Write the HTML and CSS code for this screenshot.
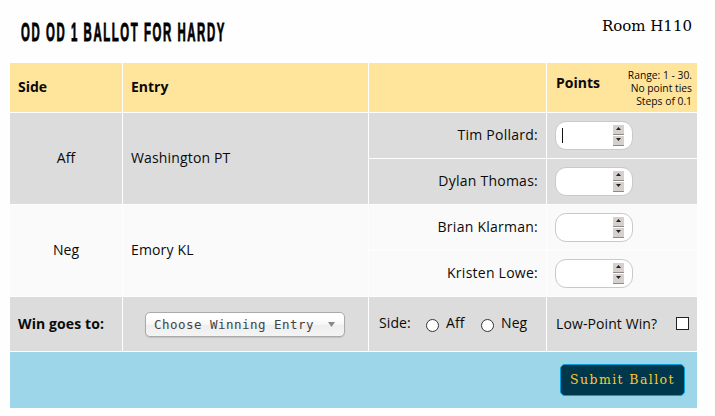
FILE: index.html
```html
<!DOCTYPE html>
<html lang="en">
<head>
<meta charset="utf-8">
<title>Ballot</title>
<link rel="stylesheet" href="styles.css">
</head>
<body>
<header class="top">
  <h1><span class="title">OD OD 1 BALLOT FOR HARDY</span></h1>
  <div class="room">Room H110</div>
</header>
<main class="ballot">
  <div class="cell head">Side</div>
  <div class="cell head">Entry</div>
  <div class="cell head"></div>
  <div class="cell head points"><span class="points-label">Points</span><small>Range: 1 - 30.<br>No point ties<br>Steps of 0.1</small></div>

  <div class="cell gray tall center">Aff</div>
  <div class="cell gray tall entry">Washington PT</div>
  <div class="cell gray name">Tim Pollard:</div>
  <div class="cell gray"><div class="num"><i class="caret"></i><span class="spin"><b class="up"></b><b class="down"></b></span></div></div>
  <div class="cell gray name">Dylan Thomas:</div>
  <div class="cell gray"><div class="num"><span class="spin"><b class="up"></b><b class="down"></b></span></div></div>

  <div class="cell light tall center">Neg</div>
  <div class="cell light tall entry">Emory KL</div>
  <div class="cell light name">Brian Klarman:</div>
  <div class="cell light"><div class="num"><span class="spin"><b class="up"></b><b class="down"></b></span></div></div>
  <div class="cell light name">Kristen Lowe:</div>
  <div class="cell light"><div class="num"><span class="spin"><b class="up"></b><b class="down"></b></span></div></div>

  <div class="cell gray strong">Win goes to:</div>
  <div class="cell gray pick"><div class="select"><span>Choose Winning Entry</span><i class="arrow"></i></div></div>
  <div class="cell gray side"><span class="side-label">Side:</span><i class="radio"></i><span class="aff">Aff</span><i class="radio"></i><span>Neg</span></div>
  <div class="cell gray low"><span>Low-Point Win?</span><i class="check"></i></div>

  <div class="cell foot"><button class="submit">Submit Ballot</button></div>
</main>
</body>
</html>
```
FILE: styles.css
```css
* { box-sizing: border-box; }
body {
  margin: 0;
  width: 715px;
  height: 416px;
  overflow: hidden;
  background: #fefefe;
  color: #0a0a0a;
  font: 14px/20px "Open Sans", "Noto Sans", sans-serif;
}
.top {
  display: flex;
  justify-content: space-between;
  height: 63px;
  padding: 16px 23px 0 21px;
}
h1 {
  margin: 0;
  width: 203px;
  font: bold 26px/32px "Liberation Sans", sans-serif;
  color: #000;
  white-space: nowrap;
}
.title {
  display: inline-block;
  letter-spacing: 3.6px;
  -webkit-text-stroke: .9px #000;
  transform: scaleX(.438);
  transform-origin: 0 50%;
}
.room {
  font: 15px/20px "DejaVu Serif", serif;
  letter-spacing: 0;
  color: #000;
}
.ballot {
  display: grid;
  grid-template-columns: 112px 245px 177px 150px;
  grid-template-rows: 49px 45px 45px 45px 45px 54px 56px;
  gap: 1px;
  width: 687px;
  margin-left: 10px;
}
.cell {
  display: flex;
  align-items: center;
  padding: 0 8px;
  white-space: nowrap;
}
.head { background: #ffe49c; font-weight: bold; padding-bottom: 1px; }
.gray { background: #dcdcdc; }
.light { background: #fafafa; }
.tall { grid-row: span 2; padding-bottom: 2px; }
.entry { letter-spacing: .15px; }
.center { justify-content: center; }
.strong { font-weight: bold; letter-spacing: .1px; }
.name { justify-content: flex-end; padding-bottom: 2px; letter-spacing: .25px; }
.points { justify-content: space-between; padding: 0 5px 0 9px; }
.points-label { margin-top: -9px; }
.points small {
  margin-top: 2px;
  font-size: 10.3px;
  font-weight: normal;
  line-height: 13px;
  text-align: right;
}
.num {
  display: flex;
  align-items: center;
  width: 78px;
  height: 29px;
  padding: 0 8px 0 6px;
  border: 1px solid #c9c9c9;
  border-radius: 11px;
  background: #fff;
}
.caret { width: 1px; height: 15px; background: #111; }
.spin { display: flex; flex-direction: column; gap: 1px; margin-left: auto; }
.up, .down {
  display: flex;
  justify-content: center;
  width: 11px;
  height: 10px;
  background: #d5d0cd;
  border-bottom: 1px solid #8f8a88;
}
.up::before, .down::before {
  content: "";
  height: 3px;
  width: 5px;
  margin-top: 2px;
  background: #222;
  clip-path: polygon(50% 0, 100% 100%, 0 100%);
}
.down::before { clip-path: polygon(0 0, 100% 0, 50% 100%); }
.pick { padding-left: 22px; }
.select {
  display: flex;
  align-items: center;
  justify-content: space-between;
  width: 200px;
  height: 25px;
  margin-top: 1px;
  padding: 0 9px 0 8px;
  border: 1px solid #aaa;
  border-radius: 5px;
  background: linear-gradient(#fff 20%, #f6f6f6 50%, #eee 52%, #f4f4f4 100%);
  box-shadow: 0 1px 1px rgba(0, 0, 0, .12);
  color: #444;
  font: 12.5px/20px "DejaVu Sans Mono", monospace;
  letter-spacing: .47px;
}
.arrow { width: 7px; height: 5px; background: #888; clip-path: polygon(0 0, 100% 0, 50% 100%); }
.side { padding: 0 0 2px 10px; letter-spacing: .1px; }
.side-label { width: 47px; }
.aff { width: 35px; }
.radio {
  width: 13px;
  height: 13px;
  margin: 5px 7px 0 0;
  border: 1px solid #333;
  border-radius: 50%;
  background: #fff;
}
.low { justify-content: space-between; padding: 0 8px 0 9px; letter-spacing: .1px; }
.check { width: 13px; height: 13px; margin-bottom: 1px; border: 1px solid #222; background: #fff; }
.foot { grid-column: 1 / -1; justify-content: flex-end; padding: 0 12px; background: #9ed6e9; }
.submit {
  width: 125px;
  height: 32px;
  padding: 0 0 1px;
  border: 1px solid #009fdc;
  border-radius: 5px;
  background: #00374b;
  color: #ffc72c;
  font: 12.5px/20px "DejaVu Serif", serif;
  letter-spacing: 1.4px;
  white-space: nowrap;
}
```
